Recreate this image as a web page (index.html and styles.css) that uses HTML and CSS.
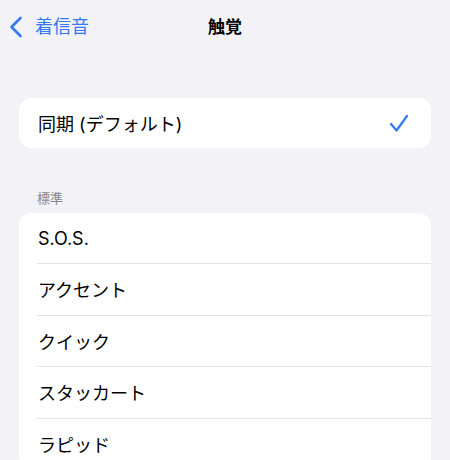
FILE: index.html
```html
<!DOCTYPE html>
<html lang="ja">
<head>
<meta charset="utf-8">
<link rel="stylesheet" href="styles.css">
</head>
<body>
<div class="nav">
  <div class="back">
    <svg class="chev" width="14" height="22" viewBox="0 0 14 22"><path d="M11.5 2 L2.5 11 L11.5 20" fill="none" stroke="#3478f6" stroke-width="2.6" stroke-linecap="round" stroke-linejoin="round"/></svg>
    <span>着信音</span>
  </div>
  <div class="title">触覚</div>
  <div></div>
</div>
<div class="content">
  <div class="card">
    <div class="row"><span>同期 (デフォルト)</span>
      <svg class="check" width="20" height="19" viewBox="0 0 20 19"><path d="M2 10 L7.5 16.5 L18 2" fill="none" stroke="#3478f6" stroke-width="2.2" stroke-linecap="round" stroke-linejoin="round"/></svg>
    </div>
  </div>
  <div class="header">標準</div>
  <div class="card list">
    <div class="row first"><span>S.O.S.</span></div>
    <div class="row"><span>アクセント</span></div>
    <div class="row"><span>クイック</span></div>
    <div class="row"><span>スタッカート</span></div>
    <div class="row"><span>ラピッド</span></div>
  </div>
</div>
</body>
</html>
```
FILE: styles.css
```css
html, body {
  margin: 0;
  padding: 0;
  background: #f2f2f7;
  font-family: Inter, "Noto Sans CJK JP", sans-serif;
  color: #000;
  overflow: hidden;
  height: 460px;
}
.nav {
  height: 54px;
  display: grid;
  grid-template-columns: 1fr auto 1fr;
  align-items: center;
}
.back {
  display: flex;
  align-items: center;
  padding-left: 9px;
  color: #3478f6;
  font-size: 18px;
  gap: 12px;
}
.back span { line-height: 1; }
.title {
  font-size: 17px;
  font-weight: 700;
  line-height: 1;
}
.content {
  padding: 44px 19px 0;
}
.card {
  background: #fff;
  border-radius: 12px;
  overflow: hidden;
}
.row {
  height: 50px;
  padding: 0 22px 0 19px;
  display: flex;
  align-items: center;
  justify-content: space-between;
  font-size: 18px;
}
.list .row {
  height: 51.5px;
  box-sizing: border-box;
}
.list .row.first {
  height: 50px;
}
.list .row + .row {
  border-top: 1px solid #e3e3e8;
  margin-left: 18px;
  padding-left: 1px;
}
.check { display: block; }
.header {
  margin: 41px 0 6px 18px;
  font-size: 13px;
  line-height: 18px;
  color: #86868b;
}
```
